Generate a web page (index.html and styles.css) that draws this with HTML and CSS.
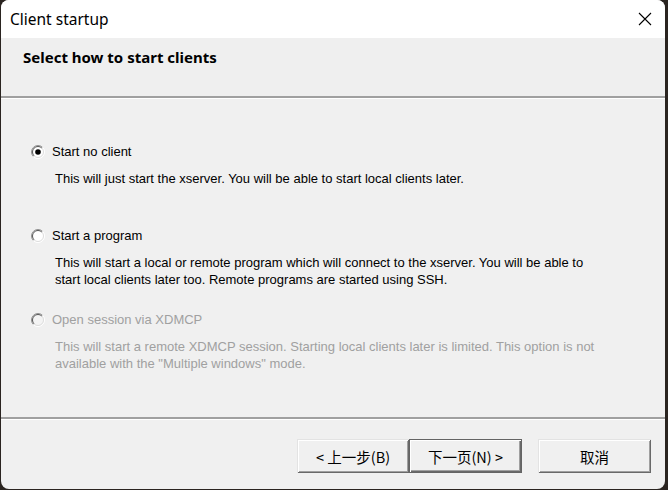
FILE: index.html
```html
<!DOCTYPE html>
<html>
<head>
<meta charset="utf-8">
<link rel="stylesheet" href="styles.css">
</head>
<body>
<div class="window">
  <div class="titlebar">
    <span class="title">Client startup</span>
    <svg class="close" width="14" height="14" viewBox="0 0 14 14"><path d="M1 1 L13 13 M13 1 L1 13" stroke="#000" stroke-width="1.1" fill="none"/></svg>
  </div>
  <div class="header"><h1 class="heading">Select how to start clients</h1></div>
  <div class="etched"></div>
  <div class="content">
    <div class="option">
      <div class="opt-label">
        <svg class="radio" width="14" height="14" viewBox="0 0 14 14">
          <circle cx="7" cy="7" r="6.5" fill="#fff"/>
          <path d="M2.4 11.6 A6.5 6.5 0 0 1 11.6 2.4" stroke="#909090" fill="none"/>
          <path d="M11.6 2.4 A6.5 6.5 0 0 1 2.4 11.6" stroke="#ffffff" fill="none"/>
          <path d="M3.1 10.9 A5.5 5.5 0 0 1 10.9 3.1" stroke="#555" fill="none"/>
          <path d="M10.9 3.1 A5.5 5.5 0 0 1 3.1 10.9" stroke="#dcdcdc" fill="none"/>
          <circle cx="7" cy="7" r="2.8" fill="#000"/>
        </svg>
        <span>Start no client</span>
      </div>
      <p class="desc">This will just start the xserver. You will be able to start local clients later.</p>
    </div>
    <div class="option">
      <div class="opt-label">
        <svg class="radio" width="14" height="14" viewBox="0 0 14 14">
          <circle cx="7" cy="7" r="6.5" fill="#fff"/>
          <path d="M2.4 11.6 A6.5 6.5 0 0 1 11.6 2.4" stroke="#909090" fill="none"/>
          <path d="M11.6 2.4 A6.5 6.5 0 0 1 2.4 11.6" stroke="#ffffff" fill="none"/>
          <path d="M3.1 10.9 A5.5 5.5 0 0 1 10.9 3.1" stroke="#555" fill="none"/>
          <path d="M10.9 3.1 A5.5 5.5 0 0 1 3.1 10.9" stroke="#dcdcdc" fill="none"/>
        </svg>
        <span>Start a program</span>
      </div>
      <p class="desc">This will start a local or remote program which will connect to the xserver. You will be able to<br>start local clients later too. Remote programs are started using SSH.</p>
    </div>
    <div class="option disabled">
      <div class="opt-label">
        <svg class="radio" width="14" height="14" viewBox="0 0 14 14">
          <circle cx="7" cy="7" r="6.5" fill="#f4f4f4"/>
          <path d="M2.4 11.6 A6.5 6.5 0 0 1 11.6 2.4" stroke="#909090" fill="none"/>
          <path d="M11.6 2.4 A6.5 6.5 0 0 1 2.4 11.6" stroke="#ffffff" fill="none"/>
          <path d="M3.1 10.9 A5.5 5.5 0 0 1 10.9 3.1" stroke="#555" fill="none"/>
          <path d="M10.9 3.1 A5.5 5.5 0 0 1 3.1 10.9" stroke="#dcdcdc" fill="none"/>
        </svg>
        <span>Open session via XDMCP</span>
      </div>
      <p class="desc">This will start a remote XDMCP session. Starting local clients later is limited. This option is not<br>available with the "Multiple windows" mode.</p>
    </div>
  </div>
  <div class="etched"></div>
  <div class="footer">
    <div class="btn-group">
      <button class="btn">&lt; 上一步(B)</button>
      <button class="btn btn-default">下一页(N) &gt;</button>
    </div>
    <button class="btn btn-cancel">取消</button>
  </div>
</div>
</body>
</html>
```
FILE: styles.css
```css
html, body {
  margin: 0;
  padding: 0;
}
body {
  background: #2a2420;
  width: 668px;
  height: 490px;
  overflow: hidden;
}
.window {
  margin-left: 1px;
  width: 664px;
  height: 489px;
  background: #f0f0f0;
  border-radius: 8px;
  overflow: hidden;
  display: flex;
  flex-direction: column;
  font-family: "Liberation Sans", Arial, sans-serif;
  font-size: 13px;
  color: #000;
}
.titlebar {
  height: 38px;
  flex: none;
  background: #fff;
  display: flex;
  align-items: center;
  justify-content: space-between;
  padding: 0 13px 0 9px;
}
.title {
  font-family: "Noto Sans", "Open Sans", sans-serif;
  font-size: 15.5px;
  color: #000;
  margin-top: -1px;
}
.close {
  display: block;
}
.header {
  height: 58px;
  flex: none;
  background: #efefef;
  box-sizing: border-box;
  padding: 10px 0 0 22px;
}
.heading {
  margin: 0;
  font-family: "Noto Sans", "Open Sans", sans-serif;
  font-weight: bold;
  font-size: 15px;
  line-height: 18px;
}
.etched {
  flex: none;
  height: 2px;
  background: #a0a0a0;
  border-bottom: 1px solid #fff;
}
.content {
  flex: 1;
  padding: 44px 0 0 30px;
  box-sizing: border-box;
}
.option {
  margin-bottom: 23px;
}
.opt-label {
  display: flex;
  align-items: center;
  gap: 7px;
  line-height: 17px;
  height: 17px;
}
.radio {
  display: block;
  flex: none;
}
.desc {
  margin: 10px 0 0 24px;
  line-height: 17px;
  min-height: 34px;
}
.disabled {
  color: #a0a0a0;
}
.footer {
  flex: none;
  height: 69px;
  box-sizing: border-box;
  padding: 19px 14px 0 0;
  display: flex;
  justify-content: flex-end;
  align-items: flex-start;
  gap: 16px;
}
.btn-group {
  display: flex;
}
.btn {
  height: 34px;
  width: 112px;
  margin: 0;
  padding: 0;
  background: #f0f0f0;
  border: none;
  box-shadow: inset 1px 1px 0 #e3e3e3, inset -1px -1px 0 #696969, inset 2px 2px 0 #fff, inset -2px -2px 0 #a0a0a0;
  font-family: "Noto Sans CJK SC", "Noto Sans", sans-serif;
  font-size: 14.5px;
  color: #000;
}
.btn-default {
  width: 113px;
  box-shadow: inset 0 0 0 1px #646464, inset 2px 2px 0 #fff, inset -2px -2px 0 #696969, inset -3px -3px 0 #a0a0a0;
}
.btn-cancel {
  width: 113px;
}
```
